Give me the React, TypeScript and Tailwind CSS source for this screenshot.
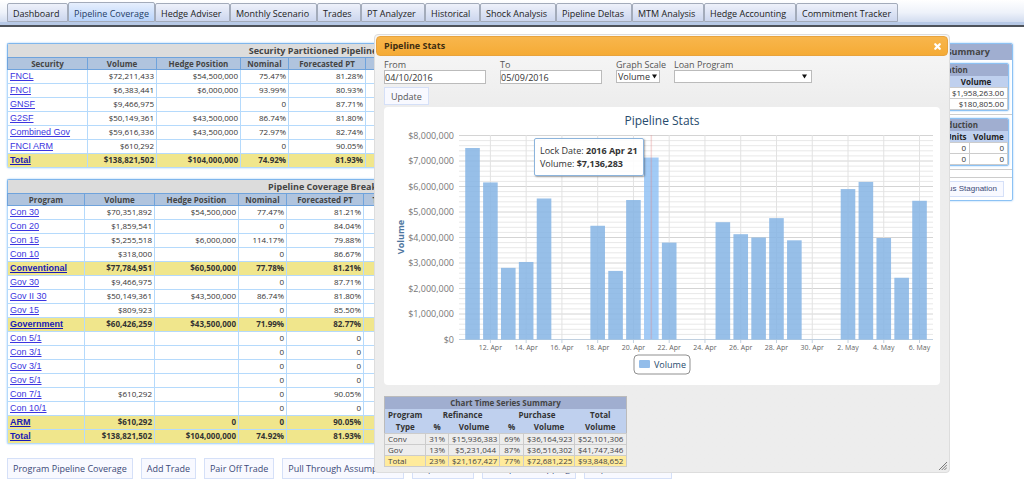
import { useState } from "react";
import { X } from "lucide-react";
import clsx from "clsx";

const tabs = [
  { label: "Dashboard", width: "w-[61px]" },
  { label: "Pipeline Coverage", width: "w-[87px]" },
  { label: "Hedge Adviser", width: "w-[75px]" },
  { label: "Monthly Scenario", width: "w-[87px]" },
  { label: "Trades", width: "w-[44px]" },
  { label: "PT Analyzer", width: "w-[64px]" },
  { label: "Historical", width: "w-[55px]" },
  { label: "Shock Analysis", width: "w-[76px]" },
  { label: "Pipeline Deltas", width: "w-[76px]" },
  { label: "MTM Analysis", width: "w-[72px]" },
  { label: "Hedge Accounting", width: "w-[92px]" },
  { label: "Commitment Tracker", width: "w-[102px]" },
];

type Row = { cells: string[]; total?: boolean };

const securityRows: Row[] = [
  { cells: ["FNCL", "$72,211,433", "$54,500,000", "75.47%", "81.28%"] },
  { cells: ["FNCI", "$6,383,441", "$6,000,000", "93.99%", "80.93%"] },
  { cells: ["GNSF", "$9,466,975", "", "0", "87.71%"] },
  { cells: ["G2SF", "$50,149,361", "$43,500,000", "86.74%", "81.80%"] },
  { cells: ["Combined Gov", "$59,616,336", "$43,500,000", "72.97%", "82.74%"] },
  { cells: ["FNCI ARM", "$610,292", "", "0", "90.05%"] },
  { cells: ["Total", "$138,821,502", "$104,000,000", "74.92%", "81.93%"], total: true },
];

const programRows: Row[] = [
  { cells: ["Con 30", "$70,351,892", "$54,500,000", "77.47%", "81.21%"] },
  { cells: ["Con 20", "$1,859,541", "", "0", "84.04%"] },
  { cells: ["Con 15", "$5,255,518", "$6,000,000", "114.17%", "79.88%"] },
  { cells: ["Con 10", "$318,000", "", "0", "86.67%"] },
  { cells: ["Conventional", "$77,784,951", "$60,500,000", "77.78%", "81.21%"], total: true },
  { cells: ["Gov 30", "$9,466,975", "", "0", "87.71%"] },
  { cells: ["Gov II 30", "$50,149,361", "$43,500,000", "86.74%", "81.80%"] },
  { cells: ["Gov 15", "$809,923", "", "0", "85.50%"] },
  { cells: ["Government", "$60,426,259", "$43,500,000", "71.99%", "82.77%"], total: true },
  { cells: ["Con 5/1", "", "", "0", "0"] },
  { cells: ["Con 3/1", "", "", "0", "0"] },
  { cells: ["Gov 3/1", "", "", "0", "0"] },
  { cells: ["Gov 5/1", "", "", "0", "0"] },
  { cells: ["Con 7/1", "$610,292", "", "0", "90.05%"] },
  { cells: ["Con 10/1", "", "", "0", "0"] },
  { cells: ["ARM", "$610,292", "0", "0", "90.05%"], total: true },
  { cells: ["Total", "$138,821,502", "$104,000,000", "74.92%", "81.93%"], total: true },
];

const actions = [
  "Program Pipeline Coverage",
  "Add Trade",
  "Pair Off Trade",
  "Pull Through Assumptions",
  "Export Data",
  "Group File Mapping",
  "Report Lock Rates",
];

// day is counted from April 1st, so May 2nd is 32
const bars = [
  { day: 11, value: 7.51 },
  { day: 12, value: 6.16 },
  { day: 13, value: 2.81 },
  { day: 14, value: 3.04 },
  { day: 15, value: 5.53 },
  { day: 18, value: 4.46 },
  { day: 19, value: 2.69 },
  { day: 20, value: 5.47 },
  { day: 21, value: 7.136 },
  { day: 22, value: 3.8 },
  { day: 25, value: 4.6 },
  { day: 26, value: 4.13 },
  { day: 27, value: 4.0 },
  { day: 28, value: 4.76 },
  { day: 29, value: 3.89 },
  { day: 32, value: 5.9 },
  { day: 33, value: 6.18 },
  { day: 34, value: 3.98 },
  { day: 35, value: 2.42 },
  { day: 36, value: 5.44 },
];
const HOVERED = 21;

const dayX = (day: number) => 106.4 + (day - 12) * 17.88;
const valueY = (value: number) => 232.5 - value * 25.5;

const NavTabs = () => (
  <nav className="border-b-2 border-[#4e535a] bg-linear-to-b from-white via-[#eef2fa] to-[#c9d5ec]">
    <ul className="flex items-end border-b-3 border-[#b7c9e6] pl-[7px] pt-[2px]">
      {tabs.map(({ label, width }, i) => (
        <li key={label} className={clsx("shrink-0", width)}>
          <a
            href="#"
            className={clsx(
              "block whitespace-nowrap rounded-t-xs border border-[#a3abba] pl-[5px] text-[9px]",
              i === 1
                ? "h-5 bg-linear-to-b from-[#e6effd] to-[#b9d4fb] leading-[21px] text-[#1f3d66]"
                : "h-[19px] bg-linear-to-b from-[#eef1fa] to-[#ccd6ee] leading-[19px] text-[#222]"
            )}
          >
            {label}
          </a>
        </li>
      ))}
    </ul>
  </nav>
);

type CoverageProps = { title: string; first: string; rows: Row[]; wide?: boolean };

const CoverageTable = ({ title, first, rows, wide }: CoverageProps) => (
  <div className="overflow-hidden rounded-xs shadow-[0_0_2px_#8fc6fa]">
    <table className="w-full table-fixed border-collapse border border-[#7fb6ec] text-[8px] leading-[13px] text-[#333]">
      <colgroup>
        <col className={wide ? "w-[80px]" : "w-[77px]"} />
        <col className={wide ? "w-[69px]" : "w-[70px]"} />
        <col className="w-[84px]" />
        <col className="w-[48px]" />
        <col className="w-[77px]" />
        <col className="w-[77px]" />
        <col />
      </colgroup>
      <thead>
        <tr>
          <th colSpan={7} className="bg-[#dcdcdc] text-[9px] text-[#444]">
            {title}
          </th>
        </tr>
        <tr className="bg-[#b0c4de]">
          {[first, "Volume", "Hedge Position", "Nominal", "Forecasted PT", "Total Exposure", ""].map((h) => (
            <th key={h} className="border border-[#6fa3dc] font-bold leading-[11px] text-[#444]">
              {h}
            </th>
          ))}
        </tr>
      </thead>
      <tbody>
        {rows.map(({ cells, total }) => (
          <tr key={cells[0]} className={total ? "bg-[#f0e68c] font-bold" : "bg-white"}>
            {cells.map((cell, i) =>
              i === 0 ? (
                <td key={i} className="border border-[#b5dafc] pl-[2px] font-['Liberation_Sans',sans-serif] text-[9px]">
                  <a href="#" className={clsx("underline", total ? "text-[#1a1ab4]" : "text-[#3b35e0]")}>
                    {cell}
                  </a>
                </td>
              ) : (
                <td key={i} className="border border-[#b5dafc] pb-[2px] pr-[2px] text-right leading-[11px]">
                  {cell}
                </td>
              )
            )}
            <td className="border border-[#b5dafc]" />
            <td className="border border-[#b5dafc]" />
          </tr>
        ))}
      </tbody>
    </table>
  </div>
);

type MiniProps = { title: string; heads: string[]; rows: string[][]; cols: string[] };

const MiniTable = ({ title, heads, rows, cols }: MiniProps) => (
  <div className="overflow-hidden rounded-xs border border-[#8cc2f4] shadow-[0_0_2px_#8fc6fa]">
    <table className="w-full table-fixed border-collapse text-[8px] leading-[10px] text-[#333]">
      <colgroup>
        {cols.map((c, i) => (
          <col key={i} className={c} />
        ))}
      </colgroup>
      <thead>
        <tr>
          <th colSpan={heads.length} className="bg-[#a0aed0] leading-[12px] text-[#444]">
            {title}
          </th>
        </tr>
        <tr className="bg-[#bfd0ee]">
          {heads.map((h) => (
            <th key={h} className="leading-[11px] text-[#222]">
              {h}
            </th>
          ))}
        </tr>
      </thead>
      <tbody>
        {rows.map((r, i) => (
          <tr key={i}>
            {r.map((c, j) => (
              <td key={j} className="border border-[#ccc] pr-[3px] text-right">
                {c}
              </td>
            ))}
          </tr>
        ))}
      </tbody>
    </table>
  </div>
);

const SummaryPanel = () => (
  <aside className="w-[136px] shrink-0 self-start overflow-hidden rounded-xs border border-[#8cc2f4] shadow-[0_0_2px_#8fc6fa]">
    <h2 className="bg-[#a0aed0] pl-2 text-center text-[9px] font-bold leading-4 text-[#444]">Pipeline Summary</h2>
    <div className="border-b border-[#ccc] p-[3px]">
      <MiniTable
        title="Origination"
        heads={["Type", "Volume"]}
        cols={["", "w-[63px]"]}
        rows={[
          ["", "$1,958,263.00"],
          ["", "$180,805.00"],
        ]}
      />
    </div>
    <div className="border-b border-[#ccc] p-[3px]">
      <MiniTable
        title="Loan Production"
        heads={["Type", "Units", "Volume"]}
        cols={["", "w-[27px]", "w-[38px]"]}
        rows={[
          ["", "0", "0"],
          ["", "0", "0"],
        ]}
      />
    </div>
    <div className="h-2 border-b border-[#ccc]" />
    <div className="flex justify-end px-2 py-[3px]">
      <button className="border border-[#d5e0f8] bg-[#f8f9ff] px-[6px] font-['Liberation_Sans',sans-serif] text-[8px] leading-[14px] text-[#3c4a78]">
        Status Stagnation
      </button>
    </div>
  </aside>
);

const VolumeChart = () => (
  <div className="relative rounded-sm bg-white">
    <svg viewBox="0 0 556 278" className="block w-full">
      <text x="278" y="18" textAnchor="middle" fontSize="12" fill="#274b6d">
        Pipeline Stats
      </text>
      {Array.from({ length: 41 }, (_, i) => (
        <line
          key={i}
          x1="75"
          x2="549"
          y1={valueY(i / 5)}
          y2={valueY(i / 5)}
          stroke={i === 0 ? "#c0d0e0" : i % 5 === 0 ? "#d4d4d4" : "#e8e8e8"}
        />
      ))}
      {Array.from({ length: 13 }, (_, i) => (
        <g key={i}>
          <line x1={dayX(12 + i * 2)} x2={dayX(12 + i * 2)} y1="28" y2="232" stroke="#e2e2e2" />
          <line x1={dayX(12 + i * 2)} x2={dayX(12 + i * 2)} y1="232" y2="236" stroke="#c0d0e0" />
          <text x={dayX(12 + i * 2)} y="243" textAnchor="middle" fontSize="7" fill="#666">
            {i < 10 ? `${12 + i * 2}. Apr` : `${i * 2 - 18}. May`}
          </text>
        </g>
      ))}
      {Array.from({ length: 9 }, (_, i) => (
        <text key={i} x="70" y={valueY(i) + 3} textAnchor="end" fontSize="9" fill="#777">
          {i === 0 ? "$0" : `$${i},000,000`}
        </text>
      ))}
      <text x="20" y="130" transform="rotate(-90 20 130)" textAnchor="middle" fontSize="9" fontWeight="bold" fill="#4d759e">
        Volume
      </text>
      {bars.map(({ day, value }) => (
        <rect
          key={day}
          x={dayX(day) - 7.3}
          y={valueY(value)}
          width="14.6"
          height={232.5 - valueY(value)}
          fill={day === HOVERED ? "#93c3f5" : "#86b4e4"}
          fillOpacity="0.86"
        />
      ))}
      <line x1={dayX(HOVERED)} x2={dayX(HOVERED)} y1="28" y2="232" stroke="#e08080" strokeOpacity="0.3" strokeWidth="1.5" />
      <rect x="250" y="248" width="56" height="19" rx="4" fill="#fff" stroke="#909090" />
      <rect x="255" y="253" width="11" height="8" rx="1" fill="#93bdea" />
      <text x="270" y="261" fontSize="9" fill="#274b6d">
        Volume
      </text>
    </svg>
    <div className="absolute left-[150px] top-[31px] rounded-xs border border-[#8cb4dc] bg-white/90 px-[5px] py-[5px] text-[9px] leading-[13px] text-[#333] shadow-[1px_1px_2px_rgba(0,0,0,0.35)]">
      <p>
        Lock Date: <b>2016 Apr 21</b>
      </p>
      <p>
        Volume: <b>$7,136,283</b>
      </p>
    </div>
  </div>
);

const Arrow = ({ className }: { className: string }) => (
  <svg viewBox="0 0 6 5" className={clsx("pointer-events-none absolute top-1 h-[5px] w-[5px]", className)}>
    <path d="M0 0h6L3 5z" fill="#111" />
  </svg>
);

const FilterForm = () => {
  const [from, setFrom] = useState("04/10/2016");
  const [to, setTo] = useState("05/09/2016");

  return (
    <form className="text-[9px] leading-[11px] text-[#555]" onSubmit={(e) => e.preventDefault()}>
      <div className="flex gap-[14px]">
        <label className="w-[102px]">
          From
          <input
            value={from}
            onChange={(e) => setFrom(e.target.value)}
            className="block h-[14px] w-full border border-[#bbb] bg-white text-[#333]"
          />
        </label>
        <label className="w-[102px]">
          To
          <input
            value={to}
            onChange={(e) => setTo(e.target.value)}
            className="block h-[14px] w-full border border-[#bbb] bg-white text-[#333]"
          />
        </label>
        <label className="w-[44px] whitespace-nowrap">
          Graph Scale
          <span className="relative block">
            <select className="block h-[13px] w-full appearance-none border border-[#bbb] bg-white pl-px text-[#333]">
              <option>Volume</option>
              <option>Units</option>
            </select>
            <Arrow className="right-[3px]" />
          </span>
        </label>
        <label className="w-[138px]">
          Loan Program
          <span className="relative block">
            <select className="block h-[13px] w-full appearance-none border border-[#bbb] bg-white pl-px text-[#333]">
              <option></option>
            </select>
            <Arrow className="right-[5px]" />
          </span>
        </label>
      </div>
      <button className="mt-[3px] h-[18px] border border-[#d5e0f8] bg-[#f8f9ff] px-[6px] text-[#555]">Update</button>
    </form>
  );
};

const seriesRows = [
  ["Conv", "31%", "$15,936,383", "69%", "$36,164,923", "$52,101,306"],
  ["Gov", "13%", "$5,231,044", "87%", "$36,516,302", "$41,747,346"],
  ["Total", "23%", "$21,167,427", "77%", "$72,681,225", "$93,848,652"],
];

const SeriesSummary = () => (
  <table className="mt-[11px] w-[242px] table-fixed border-collapse border border-[#bbb] text-[8px] leading-[10px] text-[#444]">
    <colgroup>
      <col className="w-[41px]" />
      <col className="w-[23px]" />
      <col className="w-[51px]" />
      <col className="w-[24px]" />
      <col className="w-[51px]" />
      <col className="w-[52px]" />
    </colgroup>
    <thead className="leading-[12px]">
      <tr className="bg-[#a0aed0]">
        <th colSpan={6}>Chart Time Series Summary</th>
      </tr>
      <tr className="bg-[#bfd0ee] text-[#333]">
        <th>Program</th>
        <th colSpan={2}>Refinance</th>
        <th colSpan={2}>Purchase</th>
        <th>Total</th>
      </tr>
      <tr className="bg-[#bfd0ee] text-[#333]">
        {["Type", "%", "Volume", "%", "Volume", "Volume"].map((h, i) => (
          <th key={i}>{h}</th>
        ))}
      </tr>
    </thead>
    <tbody>
      {seriesRows.map((row) => (
        <tr key={row[0]} className={row[0] === "Total" ? "bg-[#ffeb9c]" : ""}>
          {row.map((c, i) => (
            <td key={i} className={clsx("border border-[#ccc] px-[3px]", i > 0 && "text-right")}>
              {c}
            </td>
          ))}
        </tr>
      ))}
    </tbody>
  </table>
);

const StatsDialog = () => (
  <div
    role="dialog"
    aria-label="Pipeline Stats"
    className="absolute left-[374px] right-[74px] top-[34px] rounded-sm border border-[#ddd] bg-[#ededed] bg-linear-to-b from-[#f8f8f8] to-[#ededed] to-[70px] p-px"
  >
    <div className="flex h-5 items-center justify-between rounded-sm border border-[#e8a33d] bg-linear-to-b from-[#f8b64c] to-[#f5ab35] pl-[7px] pr-[5px]">
      <h2 className="text-[9px] font-bold text-[#3f2d10]">Pipeline Stats</h2>
      <button aria-label="Close" className="text-white">
        <X className="h-[9px] w-[9px]" strokeWidth={6} />
      </button>
    </div>
    <div className="px-2 pb-1 pt-[3px]">
      <FilterForm />
      <div className="mt-[2px]">
        <VolumeChart />
      </div>
      <SeriesSummary />
    </div>
    <svg viewBox="0 0 8 8" className="absolute bottom-[2px] right-[2px] h-2 w-2" stroke="#777" strokeWidth="1">
      <path d="M0 8L8 0M2.7 8L8 2.7M5.4 8L8 5.4" />
    </svg>
  </div>
);

const App = () => (
  <div className="relative min-h-screen overflow-hidden bg-white font-['Open_Sans',sans-serif]">
    <NavTabs />
    <main className="flex justify-between pl-[7px] pr-[11px] pt-4">
      <div className="max-w-[656px] flex-1">
        <CoverageTable title="Security Partitioned Pipeline Coverage" first="Security" rows={securityRows} wide />
        <div className="mt-[11px]">
          <CoverageTable title="Pipeline Coverage Breakdown" first="Program" rows={programRows} />
        </div>
        <div className="mt-[14px] flex gap-2">
          {actions.map((a) => (
            <button
              key={a}
              className="h-[21px] shrink-0 whitespace-nowrap border border-[#d5e0f8] bg-[#f8f9ff] px-[5px] text-[9px] text-[#3c4a78]"
            >
              {a}
            </button>
          ))}
        </div>
      </div>
      <SummaryPanel />
    </main>
    <StatsDialog />
  </div>
);

export default App;
